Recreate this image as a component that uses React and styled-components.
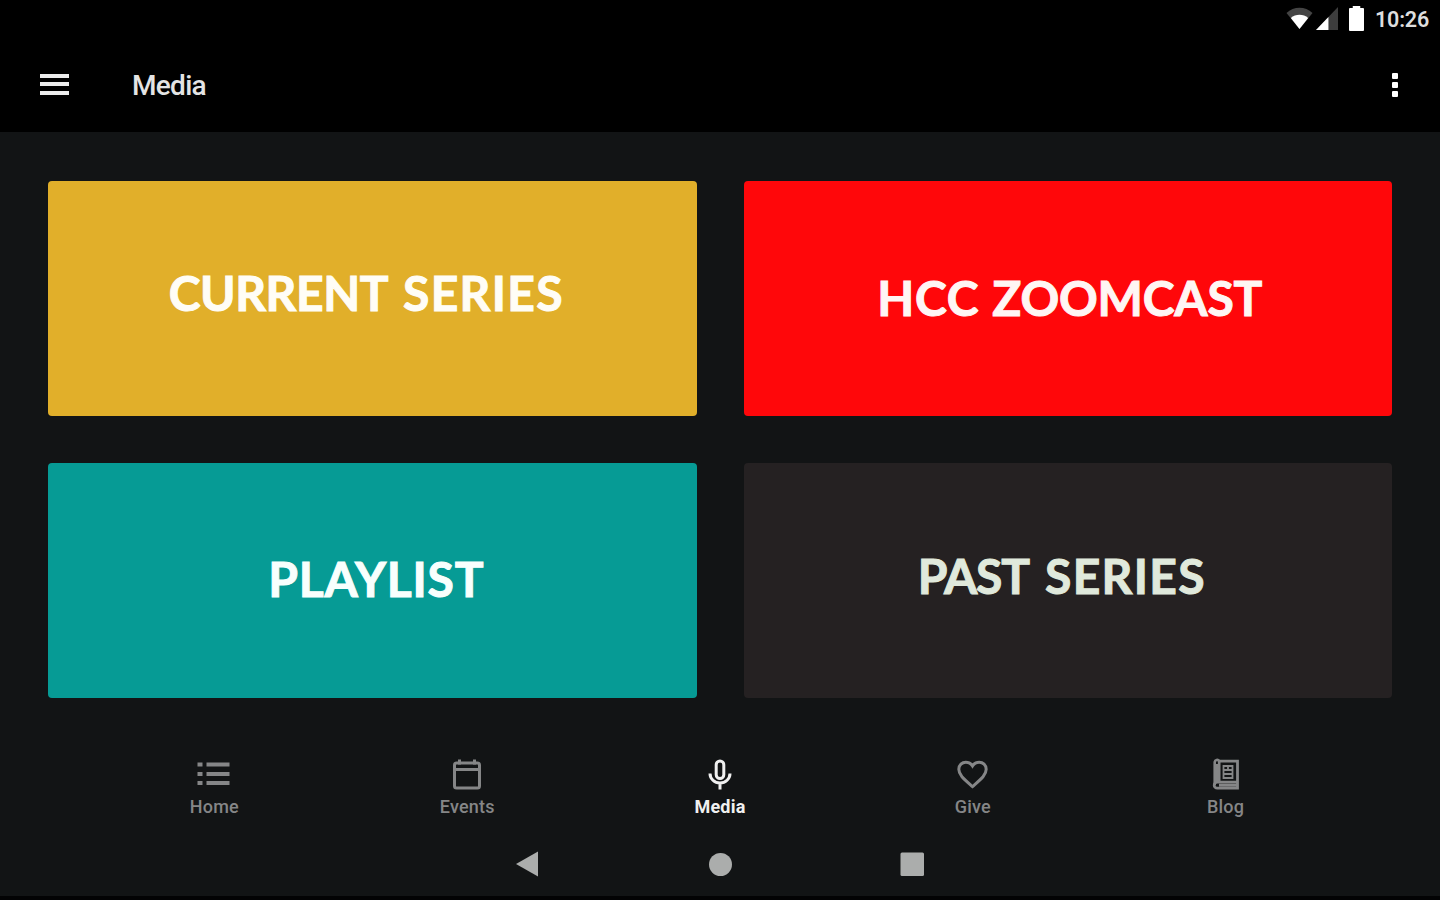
import styled, { createGlobalStyle } from "styled-components";

const cards = [
  {
    id: 1,
    words: [
      { text: "CURRENT", spacing: -0.45 },
      { text: "SERIES", spacing: 1.3 },
    ],
    bg: "#e1af2a",
    color: "#fffdf6",
    gap: 15,
    x: -6,
    y: -6,
  },
  {
    id: 2,
    words: [
      { text: "HCC", spacing: 0.75 },
      { text: "ZOOMCAST", spacing: -0.2 },
    ],
    bg: "#ff070a",
    color: "#fff6f4",
    gap: 13,
    x: 2,
    y: -1,
  },
  {
    id: 3,
    words: [{ text: "PLAYLIST", spacing: 0.8 }],
    bg: "#069b95",
    color: "#f8fffd",
    gap: 0,
    x: 4,
    y: -2,
  },
  {
    id: 4,
    words: [
      { text: "PAST", spacing: -1.1 },
      { text: "SERIES", spacing: 1.3 },
    ],
    bg: "#252122",
    color: "#e0e9dc",
    gap: 16,
    x: -6,
    y: -5,
  },
];

const HomeIcon = () => (
  <svg width="34" height="32" viewBox="0 0 34 32" fill="currentColor">
    <path d="M0.500 4.500h5v4h-5zM0.500 14h5v4h-5zM0.500 23h5v4h-5zM9.500 4.500h23v4h-23zM9.500 14h23v4h-23zM9.500 23h23v4h-23z" />
  </svg>
);

const EventsIcon = () => (
  <svg width="34" height="32" viewBox="0 0 34 32" fill="none" stroke="currentColor" strokeWidth="3">
    <rect x="4.500" y="5" width="25" height="25" rx="2" />
    <path d="M4 11.500h26M9.500 1.500v5M24.500 1.500v5" />
  </svg>
);

const MediaIcon = () => (
  <svg width="34" height="32" viewBox="0 0 34 32" fill="none" stroke="currentColor" strokeWidth="3">
    <rect x="13.200" y="3" width="7.600" height="17.500" rx="3.800" />
    <path d="M7 15.500a10 9.500 0 0 0 20 0M17 25v6.500" />
  </svg>
);

const GiveIcon = () => (
  <svg width="34" height="32" viewBox="0 0 34 32" fill="none" stroke="currentColor" strokeWidth="3">
    <path d="M16.500 28.500C8.500 21.500 2.800 17.200 2.800 11.300C2.800 7 6.100 4.200 9.800 4.200C12.500 4.200 15 5.600 16.500 8C18 5.600 20.500 4.200 23.200 4.200C26.900 4.200 30.200 7 30.200 11.300C30.200 17.200 24.500 21.500 16.500 28.500Z" />
  </svg>
);

const BlogIcon = () => (
  <svg width="34" height="32" viewBox="0 0 34 32" fill="none" stroke="currentColor">
    <path d="M5.700 27V4a2.500 2.500 0 0 1 4.500 -1V24" strokeWidth="2.600" />
    <path d="M8 6v18" strokeWidth="2.600" />
    <path d="M9 3.200h19.500v27H8.200a2.800 2.800 0 0 1 0-6H28" strokeWidth="2.800" />
    <path d="M10 27.200h18" strokeWidth="3" />
    <path d="M14.500 8h9v12h-9zM14.500 12h9M14.500 16h9M19 8v4" strokeWidth="1.800" />
  </svg>
);

const tabs = [
  { label: "Home", Icon: HomeIcon },
  { label: "Events", Icon: EventsIcon },
  { label: "Media", Icon: MediaIcon, active: true },
  { label: "Give", Icon: GiveIcon },
  { label: "Blog", Icon: BlogIcon },
];

const App = () => {
  return (
    <>
      <GlobalStyle />
      <Screen>
        <StatusBar>
          <WifiIcon viewBox="0 0 28 24" preserveAspectRatio="none">
            <path d="M14 23L0.500 6.200C8 -1 20 -1 27.500 6.200Z" fill="#444" />
            <path d="M14 23L5 11.500C10 7 18 7 23 11.500Z" fill="#fff" />
          </WifiIcon>
          <SignalIcon viewBox="0 0 23 24" preserveAspectRatio="none">
            <path d="M0 23L23 0V23Z" fill="#3d3d3d" />
            <path d="M0 23L13 10V23Z" fill="#fff" />
          </SignalIcon>
          <BatteryIcon viewBox="0 0 16 25" preserveAspectRatio="none">
            <path d="M4 0h8v2h3a1 1 0 0 1 1 1v21a1 1 0 0 1-1 1H1a1 1 0 0 1-1-1V3a1 1 0 0 1 1-1h3z" fill="#fff" />
          </BatteryIcon>
          <Clock>10:26</Clock>
        </StatusBar>
        <AppBar>
          <MenuButton aria-label="menu">
            <span />
            <span />
            <span />
          </MenuButton>
          <Title>Media</Title>
          <MoreButton aria-label="more">
            <span />
            <span />
            <span />
          </MoreButton>
        </AppBar>
        <CardGrid>
          {cards.map((card) => (
            <Card key={card.id} $bg={card.bg}>
              <CardTitle $color={card.color} $gap={card.gap} $x={card.x} $y={card.y}>
                {card.words.map((word) => (
                  <Word key={word.text} $spacing={word.spacing}>
                    {word.text}
                  </Word>
                ))}
              </CardTitle>
            </Card>
          ))}
        </CardGrid>
        <TabBar>
          {tabs.map(({ label, Icon, active }) => (
            <Tab key={label} $active={active}>
              <Icon />
              <span>{label}</span>
            </Tab>
          ))}
        </TabBar>
        <SystemNav>
          <svg width="24" height="26" viewBox="0 0 24 26">
            <path d="M0 13L22 0.500V25.500Z" />
          </svg>
          <svg width="24" height="24" viewBox="0 0 24 24">
            <circle cx="12.500" cy="12.500" r="11.500" />
          </svg>
          <svg width="24" height="24" viewBox="0 0 24 24">
            <rect x="0.500" y="0.500" width="23.500" height="23.500" rx="1.500" />
          </svg>
        </SystemNav>
      </Screen>
    </>
  );
};

export default App;

const GlobalStyle = createGlobalStyle`
  * {
    box-sizing: border-box;
  }
  body {
    margin: 0;
    background: #121415;
    font-family: Roboto, "Liberation Sans", sans-serif;
  }
`;

const Screen = styled.div`
  width: 1440px;
  height: 900px;
  display: flex;
  flex-direction: column;
  overflow: hidden;
  background: #121415;
  border-bottom: 4px solid #030304;
`;

const StatusBar = styled.header`
  height: 38px;
  flex-shrink: 0;
  display: flex;
  align-items: flex-start;
  justify-content: flex-end;
  padding: 6px 11px 0 0;
  background: #000;
`;

const WifiIcon = styled.svg`
  width: 27px;
  height: 23px;
  margin-top: 1px;
`;

const SignalIcon = styled.svg`
  width: 22px;
  height: 24px;
  margin: 1px 0 0 3px;
`;

const BatteryIcon = styled.svg`
  width: 15px;
  height: 25px;
  margin-left: 11px;
`;

const Clock = styled.span`
  margin: 1px 0 0 11px;
  font-size: 21.5px;
  line-height: 26px;
  font-weight: 600;
  letter-spacing: -0.2px;
  color: #dedede;
`;

const AppBar = styled.div`
  height: 94px;
  flex-shrink: 0;
  display: flex;
  align-items: center;
  padding: 0 42px 0 40px;
  background: #000;
`;

const MenuButton = styled.button`
  width: 29px;
  padding: 0;
  border: 0;
  background: none;
  display: flex;
  flex-direction: column;
  gap: 4.5px;
  margin-bottom: 2px;

  span {
    height: 4px;
    background: #ededed;
  }
`;

const Title = styled.h1`
  flex: 1;
  margin: 1px 0 0 63px;
  font-size: 28px;
  font-weight: 500;
  letter-spacing: -0.7px;
  color: #e4e4e4;
`;

const MoreButton = styled.button`
  padding: 0;
  border: 0;
  background: none;
  display: flex;
  flex-direction: column;
  gap: 3px;
  margin-bottom: 1px;

  span {
    width: 6px;
    height: 6px;
    border-radius: 1px;
    background: #fff;
  }
`;

const CardGrid = styled.main`
  flex-shrink: 0;
  display: grid;
  grid-template-columns: 1fr 1fr;
  grid-auto-rows: 235px;
  gap: 47px;
  padding: 49px 48px 0;
`;

const Card = styled.section`
  display: flex;
  align-items: center;
  justify-content: center;
  border-radius: 4px;
  background: ${(props) => props.$bg};
`;

const CardTitle = styled.h2`
  display: flex;
  gap: ${(props) => props.$gap}px;
  margin: 0;
  font-family: Lato, "Liberation Sans", sans-serif;
  font-size: 48px;
  line-height: 1;
  font-weight: 700;
  white-space: nowrap;
  color: ${(props) => props.$color};
  -webkit-text-stroke: 1px ${(props) => props.$color};
  transform: translate(${(props) => props.$x}px, ${(props) => props.$y}px);
`;

const Word = styled.span`
  letter-spacing: ${(props) => props.$spacing}px;
`;

const TabBar = styled.nav`
  flex-shrink: 0;
  height: 134px;
  display: flex;
  padding: 60px 88px 0;
`;

const Tab = styled.a`
  flex: 1;
  display: flex;
  flex-direction: column;
  align-items: center;
  font-size: 18px;
  line-height: 22px;
  letter-spacing: 0.2px;
  font-weight: ${(props) => (props.$active ? 700 : 500)};
  color: ${(props) => (props.$active ? "#f0f0f0" : "#858687")};

  span {
    margin-top: 6px;
  }
`;

const SystemNav = styled.footer`
  flex: 1;
  display: flex;
  align-items: center;
  justify-content: center;
  gap: 168px;

  svg {
    fill: #abadac;
  }
`;
